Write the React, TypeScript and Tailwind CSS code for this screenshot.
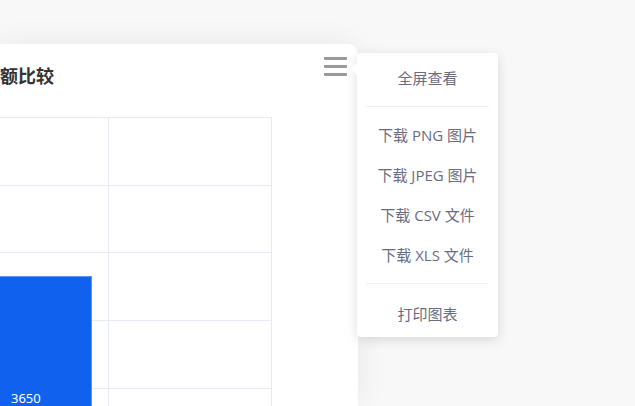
import React from 'react';

const gridY = [29, 97, 164, 232, 300];
const gridX = [108, 271];

function Chart() {
  return (
    <svg width="358" height="318" className="block">
      {gridY.map((y) => (
        <line key={y} x1="0" x2="272" y1={y + 0.5} y2={y + 0.5} stroke="#e6eaf3" strokeWidth="1" />
      ))}
      {gridX.map((x) => (
        <line key={x} x1={x + 0.5} x2={x + 0.5} y1="29" y2="318" stroke="#e6eaf3" strokeWidth="1" />
      ))}
      <rect x="-2" y="188.5" width="93.5" height="140" fill="#1062ee" stroke="#5d92f3" strokeWidth="1" />
      <text x="11" y="315" fill="#ffffff" fontSize="13" fontFamily="'Noto Sans', sans-serif">
        3650
      </text>
    </svg>
  );
}

const items = ['下载 PNG 图片', '下载 JPEG 图片', '下载 CSV 文件', '下载 XLS 文件'];

export default function App() {
  return (
    <div
      className="relative h-[406px] w-[635px] overflow-hidden bg-[#f8f8f8]"
      style={{ fontFamily: "'Open Sans', 'Noto Sans CJK SC', sans-serif" }}
    >
      <div className="relative mt-[44px] h-[362px] w-[358px] rounded-tr-[10px] bg-white shadow-[0_0_30px_rgba(0,0,0,0.07)]">
        <h2 className="whitespace-nowrap pt-[20px] text-[18px] font-bold leading-[24px] text-[#333333]">额比较</h2>
        <Chart />
        <button className="absolute right-[11px] top-[13px]" aria-label="menu">
          <svg width="23" height="20" viewBox="0 0 23 20">
            <rect x="0" y="0" width="23" height="3" rx="1" fill="#9a9a9a" />
            <rect x="0" y="8" width="23" height="3" rx="1" fill="#9a9a9a" />
            <rect x="0" y="16" width="23" height="3" rx="1" fill="#9a9a9a" />
          </svg>
        </button>
      </div>

      {/* export menu */}
      <div className="absolute left-[357px] top-[53px] flex w-[141px] flex-col rounded-[4px] bg-white pb-[3px] pt-[5px] text-[15px] text-[#686d83] shadow-[0_3px_12px_rgba(0,0,0,0.13)]">
        <div className="absolute left-[-6px] top-[10px] h-0 w-0 border-y-[6px] border-r-[6px] border-y-transparent border-r-white" />
        <div className="flex h-[40px] items-center justify-center">全屏查看</div>
        <div className="mx-[9px] my-[8px] h-px bg-[#eef0f5]" />
        {items.map((t) => (
          <div key={t} className="flex h-[40px] items-center justify-center">
            {t}
          </div>
        ))}
        <div className="mx-[9px] mb-[10px] mt-[8px] h-px bg-[#eef0f5]" />
        <div className="flex h-[40px] items-center justify-center">打印图表</div>
      </div>
    </div>
  );
}
